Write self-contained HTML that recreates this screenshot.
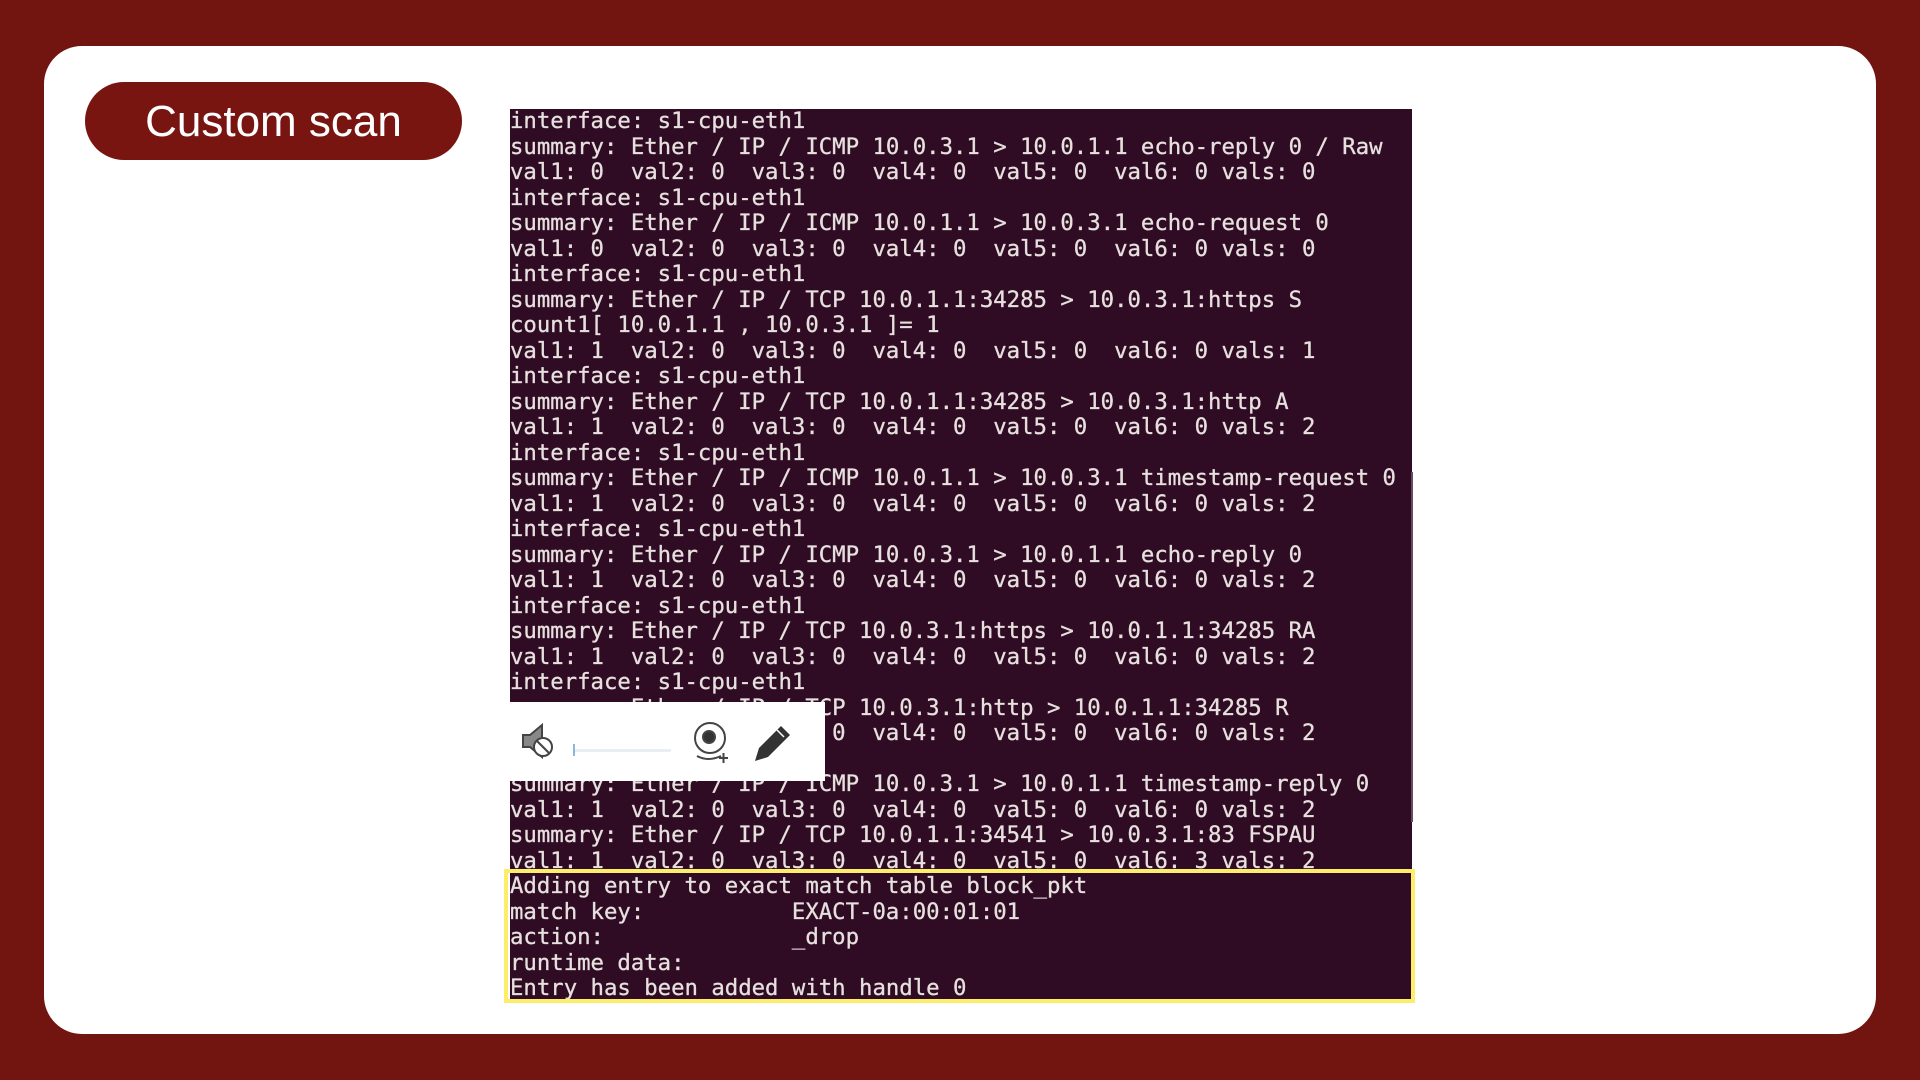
<!DOCTYPE html>
<html><head><meta charset="utf-8"><style>
html,body{margin:0;padding:0}
body{width:1920px;height:1080px;background:#721510;position:relative;overflow:hidden;font-family:"Liberation Sans",sans-serif}
.card{position:absolute;left:44px;top:46px;width:1832px;height:988px;background:#fff;border-radius:38px}
.btn{position:absolute;left:85px;top:82px;width:377px;height:78px;background:#781510;border-radius:39px;color:#fff;font-size:44px;line-height:80px;text-align:center}
.term{position:absolute;left:510px;top:109px;width:902px;height:894px;background:#300c24;overflow:hidden}
pre{position:absolute;left:0;top:0px;margin:0;font-family:"DejaVu Sans Mono","Liberation Mono",monospace;font-size:22.3px;line-height:25.5px;color:#e6e0de;-webkit-text-stroke:0.3px #e6e0de}
.yb{position:absolute;left:504px;top:869px;width:903px;height:126px;border:4px solid #fdee6a}
.pop{position:absolute;left:509px;top:702px;width:316px;height:79px;background:#fff}
.sb{position:absolute;left:1411px;top:472px;width:2px;height:350px;background:#6a4c60}
</style></head><body>
<div class="card"></div>
<div class="btn">Custom scan</div>
<div class="term"><pre>interface: s1-cpu-eth1
summary: Ether / IP / ICMP 10.0.3.1 > 10.0.1.1 echo-reply 0 / Raw
val1: 0  val2: 0  val3: 0  val4: 0  val5: 0  val6: 0 vals: 0
interface: s1-cpu-eth1
summary: Ether / IP / ICMP 10.0.1.1 > 10.0.3.1 echo-request 0
val1: 0  val2: 0  val3: 0  val4: 0  val5: 0  val6: 0 vals: 0
interface: s1-cpu-eth1
summary: Ether / IP / TCP 10.0.1.1:34285 > 10.0.3.1:https S
count1[ 10.0.1.1 , 10.0.3.1 ]= 1
val1: 1  val2: 0  val3: 0  val4: 0  val5: 0  val6: 0 vals: 1
interface: s1-cpu-eth1
summary: Ether / IP / TCP 10.0.1.1:34285 > 10.0.3.1:http A
val1: 1  val2: 0  val3: 0  val4: 0  val5: 0  val6: 0 vals: 2
interface: s1-cpu-eth1
summary: Ether / IP / ICMP 10.0.1.1 > 10.0.3.1 timestamp-request 0
val1: 1  val2: 0  val3: 0  val4: 0  val5: 0  val6: 0 vals: 2
interface: s1-cpu-eth1
summary: Ether / IP / ICMP 10.0.3.1 > 10.0.1.1 echo-reply 0
val1: 1  val2: 0  val3: 0  val4: 0  val5: 0  val6: 0 vals: 2
interface: s1-cpu-eth1
summary: Ether / IP / TCP 10.0.3.1:https > 10.0.1.1:34285 RA
val1: 1  val2: 0  val3: 0  val4: 0  val5: 0  val6: 0 vals: 2
interface: s1-cpu-eth1
summary: Ether / IP / TCP 10.0.3.1:http > 10.0.1.1:34285 R
val1: 1  val2: 0  val3: 0  val4: 0  val5: 0  val6: 0 vals: 2
interface: s1-cpu-eth1
summary: Ether / IP / ICMP 10.0.3.1 > 10.0.1.1 timestamp-reply 0
val1: 1  val2: 0  val3: 0  val4: 0  val5: 0  val6: 0 vals: 2
summary: Ether / IP / TCP 10.0.1.1:34541 > 10.0.3.1:83 FSPAU
val1: 1  val2: 0  val3: 0  val4: 0  val5: 0  val6: 3 vals: 2
Adding entry to exact match table block_pkt
match key:           EXACT-0a:00:01:01
action:              _drop
runtime data:
Entry has been added with handle 0</pre></div>
<div class="sb"></div>
<div class="yb"></div>
<div class="pop">
<svg width="316" height="79" viewBox="0 0 316 79">
 <g fill="none" stroke="#444" stroke-width="2">
  <path d="M14 33 h7 l12 -10 v32 l-12 -10 h-7 z" fill="#888"/>
  <circle cx="34" cy="45" r="9" fill="#fff"/>
  <path d="M28 39 l12 12"/>
 </g>
 <rect x="64" y="42" width="2" height="12" fill="#8ab8dc"/>
 <rect x="66" y="47" width="96" height="3" fill="#e8eef3"/>
 <g fill="none" stroke="#444" stroke-width="2">
  <circle cx="201" cy="36" r="15"/>
  <circle cx="200" cy="35" r="6" fill="#333"/>
  <path d="M188 54 q11 6 24 0"/>
  <path d="M210 56 h9 M214.5 51 v10"/>
 </g>
 <path d="M246 59 l4 -13 l22 -22 l9 9 l-22 22 z" fill="#333"/>
 <path d="M268 28 l7 7" stroke="#fff" stroke-width="1.5"/>
</svg>
</div>
</body></html>
